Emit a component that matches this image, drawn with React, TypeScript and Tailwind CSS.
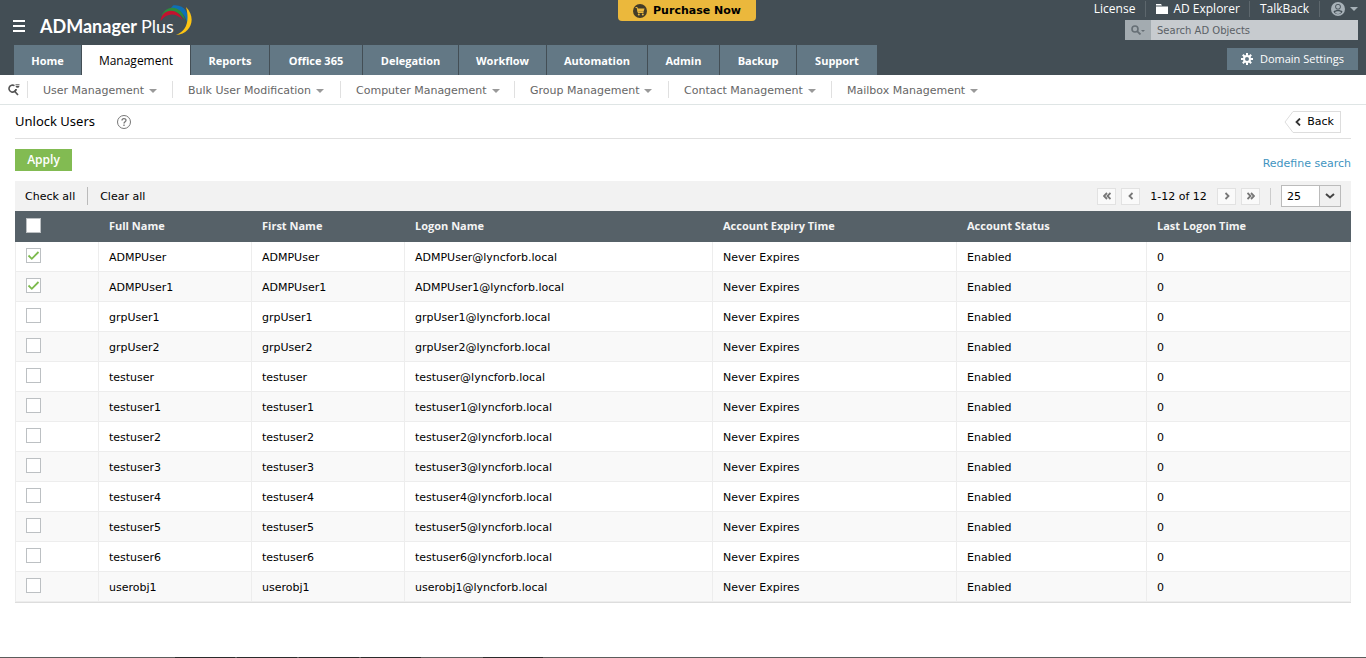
// src/pages/UnlockUsers.tsx
import React, { useState } from 'react'

interface Tab {
  label: string
  width: string
}

interface User {
  name: string
  logon: string
}

const tabs: Tab[] = [
  { label: 'Home', width: 'w-[67px]' },
  { label: 'Management', width: 'w-[108px]' },
  { label: 'Reports', width: 'w-[78px]' },
  { label: 'Office 365', width: 'w-[92px]' },
  { label: 'Delegation', width: 'w-[95px]' },
  { label: 'Workflow', width: 'w-[87px]' },
  { label: 'Automation', width: 'w-[100px]' },
  { label: 'Admin', width: 'w-[71px]' },
  { label: 'Backup', width: 'w-[76px]' },
  { label: 'Support', width: 'w-[80px]' },
]

const menus: Tab[] = [
  { label: 'User Management', width: 'w-[145px]' },
  { label: 'Bulk User Modification', width: 'w-[168px]' },
  { label: 'Computer Management', width: 'w-[174px]' },
  { label: 'Group Management', width: 'w-[154px]' },
  { label: 'Contact Management', width: 'w-[163px]' },
  { label: 'Mailbox Management', width: 'w-[163px]' },
]

const users: User[] = [
  'ADMPUser',
  'ADMPUser1',
  'grpUser1',
  'grpUser2',
  'testuser',
  'testuser1',
  'testuser2',
  'testuser3',
  'testuser4',
  'testuser5',
  'testuser6',
  'userobj1',
].map((name) => ({ name, logon: `${name}@lyncforb.local` }))

const columns = [
  'Full Name',
  'First Name',
  'Logon Name',
  'Account Expiry Time',
  'Account Status',
  'Last Logon Time',
]

const Logo: React.FC = () => (
  <div className="flex items-start font-['Lato',sans-serif] text-[18px] leading-6 text-white">
    <span className="pt-[14px] font-bold">ADManager</span>
    <span className="pt-[14px] pl-1">Plus</span>
    <svg className="-ml-[14px] mt-1 h-8 w-8" viewBox="0 0 32 32" fill="none">
      <path d="M13 1.500C24 0 30 9 28 21C25 10 21 6 11 4Z" fill="#0f6fb5" />
      <path d="M1.500 12C6 0 22 1 25 16C18 6 10 5 1.500 12Z" fill="#2d8a3e" />
      <path d="M.5 17C2 4 18 3 22.500 16C16 8.500 7 8.500 .5 17Z" fill="#c3122f" />
      <path d="M26 3C37 14 31 30 16 31C26 27 30 18 26 3Z" fill="#fcc413" />
    </svg>
  </div>
)

const Caret: React.FC<{ className?: string }> = ({ className = '' }) => (
  <svg className={`h-1 w-2 ${className}`} viewBox="0 0 8 4" fill="currentColor">
    <path d="M0 0h8L4 4Z" />
  </svg>
)

const Chevrons: React.FC<{ double?: boolean; right?: boolean }> = ({ double, right }) => (
  <svg
    className={right ? 'h-2 w-2 rotate-180' : 'h-2 w-2'}
    viewBox="0 0 8 8"
    fill="none"
    stroke="#777"
    strokeWidth="1.8"
  >
    {double ? <path d="M4 1L1 4L4 7M7.5 1L4.5 4L7.5 7" /> : <path d="M5.500 1L2.500 4L5.500 7" />}
  </svg>
)

const PageButton: React.FC<{ label: string; double?: boolean; right?: boolean }> = ({
  label,
  double,
  right,
}) => (
  <button
    aria-label={label}
    className="flex h-[17px] w-[19px] items-center justify-center border border-[#e2e2e2] bg-[#fafafa]"
    type="button"
  >
    <Chevrons double={double} right={right} />
  </button>
)

const Checkbox: React.FC<{ checked: boolean; label: string; onChange: () => void }> = ({
  checked,
  label,
  onChange,
}) => (
  <span className="grid h-[15px] w-[15px]">
    <input
      aria-label={label}
      checked={checked}
      className="col-start-1 row-start-1 h-[15px] w-[15px] appearance-none border border-[#bcc0c3] bg-white"
      onChange={onChange}
      type="checkbox"
    />
    {checked && (
      <svg
        className="pointer-events-none col-start-1 row-start-1 h-[15px] w-[15px]"
        viewBox="0 0 15 15"
        fill="none"
        stroke="#7cba4c"
        strokeWidth="1.8"
      >
        <path d="M2.500 7.500L5.800 10.800L12.500 4" />
      </svg>
    )}
  </span>
)

const Header: React.FC = () => (
  <header className="flex h-[75px] justify-between bg-[#434e55]">
    <div className="flex flex-col justify-between">
      <div className="flex h-[42px]">
        <button aria-label="Menu" className="mt-5 ml-[13px] flex h-3 w-3 flex-col justify-between" type="button">
          <span className="h-0.5 w-full bg-white" />
          <span className="h-0.5 w-full bg-white" />
          <span className="h-0.5 w-full bg-white" />
        </button>
        <div className="ml-[15px]">
          <Logo />
        </div>
      </div>
      <nav className="ml-[14px] flex gap-px">
        {tabs.map(({ label, width }) => (
          <a
            className={`${width} flex h-[30px] items-center justify-center pt-0.5 font-['Open_Sans',sans-serif] ${
              label === 'Management'
                ? 'bg-white text-[12px] text-black'
                : 'bg-[#637885] text-[11px] font-bold text-white'
            }`}
            href="#"
            key={label}
          >
            {label}
          </a>
        ))}
      </nav>
    </div>

    <button
      className="absolute left-1/2 flex h-[21px] w-[138px] -translate-x-[65px] items-center justify-center gap-[6px] rounded-b bg-[#ebb83c] text-[11px] font-bold text-black"
      type="button"
    >
      <svg className="h-[14px] w-[14px]" viewBox="0 0 14 14" fill="none">
        <circle cx="7" cy="7" r="7" fill="#433c28" />
        <path d="M2.500 3.500h1.700L5 8.500h5.500" stroke="#ebb83c" />
        <path d="M4.500 4.500h7L10.500 7.800H5Z" fill="#ebb83c" />
        <circle cx="5.800" cy="10.500" r="1" fill="#ebb83c" />
        <circle cx="9.800" cy="10.500" r="1" fill="#ebb83c" />
      </svg>
      <span className="pt-0.5">Purchase Now</span>
    </button>

    <div className="mr-2 flex flex-col items-end">
      <div className="flex h-5 items-center pb-0.5 font-['Open_Sans',sans-serif] text-[12px] text-white">
        <a className="pr-[10px]" href="#">
          License
        </a>
        <a className="flex h-4 items-center gap-[5px] border-l border-[#5d676d] pr-[9px] pl-[10px]" href="#">
          <svg className="h-[10px] w-3" viewBox="0 0 12 10" fill="currentColor">
            <path d="M0 0h5l1 1.500H0ZM0 2.500h12V10H0Z" />
          </svg>
          AD Explorer
        </a>
        <a className="flex h-4 items-center border-l border-[#5d676d] px-[10px]" href="#">
          TalkBack
        </a>
        <button
          aria-label="Account"
          className="flex h-4 items-center gap-[5px] border-l border-[#5d676d] pl-[11px] text-[#a7b1b8]"
          type="button"
        >
          <svg className="h-[14px] w-[14px]" viewBox="0 0 14 14">
            <circle cx="7" cy="7" r="7" fill="currentColor" />
            <circle cx="7" cy="4.800" r="2.800" fill="#434e55" />
            <circle cx="7" cy="4.800" r="2" fill="#a7b1b8" />
            <path d="M2.500 9.500C4 7.500 10 7.500 11.500 9.500C10 13 4 13 2.500 9.500Z" fill="#434e55" />
            <path d="M4 10.300C5 9 9 9 10 10.300C9 12.500 5 12.500 4 10.300Z" fill="#a7b1b8" />
          </svg>
          <Caret />
        </button>
      </div>
      <div className="flex h-5 w-[233px]">
        <button
          aria-label="Search"
          className="flex w-[26px] items-center justify-center bg-[#a3abb0] text-[#666f75]"
          type="button"
        >
          <svg className="h-[10px] w-[14px]" viewBox="0 0 14 10" fill="none" stroke="currentColor">
            <circle cx="4" cy="4" r="3" strokeWidth="1.600" />
            <path d="M6.300 6.300L9.500 9.500" strokeWidth="1.800" />
            <path d="M10 5h4l-2 2Z" fill="currentColor" stroke="none" />
          </svg>
        </button>
        <input
          aria-label="Search AD Objects"
          className="min-w-0 flex-1 bg-[#c7cbcf] px-[6px] text-[10px] text-[#555] placeholder:text-[#5b6166]"
          placeholder="Search AD Objects"
          type="text"
        />
      </div>
      <button
        className="mt-2 flex h-[22px] w-[131px] items-center justify-center gap-[7px] bg-[#637885] font-['Open_Sans',sans-serif] text-[11px] font-medium text-white"
        type="button"
      >
        <svg className="h-3 w-3" viewBox="0 0 12 12" fill="none" stroke="currentColor">
          <circle cx="6" cy="6" r="3" strokeWidth="2" />
          <path
            d="M6 0v2.500M6 9.500V12M0 6h2.500M9.500 6H12M1.800 1.800l1.700 1.700M8.500 8.500l1.700 1.700M1.800 10.200l1.700-1.700M8.500 3.500l1.700-1.700"
            strokeWidth="2"
          />
        </svg>
        Domain Settings
      </button>
    </div>
  </header>
)

const SubMenu: React.FC = () => (
  <nav className="flex h-[30px] items-center border-b border-[#dfe5e5] text-[11px] text-[#666]">
    <button aria-label="Find" className="flex w-[27px] justify-center" type="button">
      <svg className="h-3 w-3" viewBox="0 0 12 12" fill="none" stroke="#555">
        <path d="M6.500 1.700A3.500 3.500 0 1 0 8 5" strokeWidth="1.600" />
        <path d="M8 5C8 6 7.500 7 6.800 7.500L10 11" strokeWidth="1.700" />
        <path d="M7.500 .8h4M8 2.500h3L9.500 4Z" strokeWidth="1" />
      </svg>
    </button>
    {menus.map(({ label, width }) => (
      <button
        className={`${width} flex h-[17px] items-center gap-[5px] border-l border-[#e0e0e0] pl-[15px] whitespace-nowrap`}
        key={label}
        type="button"
      >
        <span className="pt-[3px]">{label}</span>
        <Caret className="mt-0.5 text-[#999]" />
      </button>
    ))}
  </nav>
)

export default function App() {
  const [selected, setSelected] = useState<string[]>(['ADMPUser', 'ADMPUser1'])

  const toggle = (name: string) => {
    setSelected(selected.includes(name) ? selected.filter((n) => n !== name) : [...selected, name])
  }

  const checkAll = () => setSelected(users.map((user) => user.name))
  const clearAll = () => setSelected([])
  const allChecked = selected.length === users.length

  return (
    <div className="flex min-h-screen flex-col bg-white font-['DejaVu_Sans',sans-serif] text-[11px] text-black">
      <Header />
      <SubMenu />

      <main className="mx-[15px] flex-1">
        <div className="flex h-[34px] items-center justify-between border-b border-[#e0e0e0]">
          <div className="flex items-center gap-[22px]">
            <h1 className="font-['Noto_Sans',sans-serif] text-[13px]">Unlock Users</h1>
            <button aria-label="Help" type="button">
              <svg className="h-[14px] w-[14px]" viewBox="0 0 14 14" fill="none" stroke="#777">
                <circle cx="7" cy="7" r="6.500" />
                <path d="M5 5.500C5 3 9 3 9 5.300C9 6.800 7 6.600 7 8.500M7 9.500V11" strokeWidth="1.300" />
              </svg>
            </button>
          </div>
          <button className="mr-[10px] flex h-[22px]" type="button">
            <svg className="h-[22px] w-[9px]" viewBox="0 0 9 22" fill="none" stroke="#ddd">
              <path d="M9 .5L1 11L9 21.500" />
            </svg>
            <span className="flex h-[22px] items-center gap-[6px] border border-l-0 border-[#ddd] pr-[6px] pl-[2px]">
              <svg className="h-2 w-[6px]" viewBox="0 0 6 8" fill="none" stroke="#333" strokeWidth="1.800">
                <path d="M5 .5L1.500 4L5 7.500" />
              </svg>
              <span className="pt-0.5">Back</span>
            </span>
          </button>
        </div>

        <div className="flex h-[42px] items-center justify-between">
          <button
            className="h-[22px] w-[57px] bg-[#82bb52] font-['Open_Sans',sans-serif] text-[12px] font-semibold text-white"
            type="button"
          >
            Apply
          </button>
          <a className="pt-2 text-[#3f94bf]" href="#">
            Redefine search
          </a>
        </div>

        <div className="flex h-[30px] items-center justify-between bg-[#f2f2f2] pr-[10px]">
          <div className="flex items-center">
            <button className="h-[18px] border-r border-[#bbb] pt-0.5 pr-3 pl-[10px]" onClick={checkAll} type="button">
              Check all
            </button>
            <button className="px-3 pt-0.5" onClick={clearAll} type="button">
              Clear all
            </button>
          </div>
          <div className="flex items-center">
            <div className="flex gap-[5px]">
              <PageButton double label="First page" />
              <PageButton label="Previous page" />
            </div>
            <span className="w-[77px] pt-0.5 text-center">1-12 of 12</span>
            <div className="flex gap-[5px]">
              <PageButton label="Next page" right />
              <PageButton double label="Last page" right />
            </div>
            <span className="mr-[10px] ml-[10px] h-[17px] w-px bg-[#ccc]" />
            <div className="grid h-[22px] w-[60px]">
              <select
                aria-label="Rows per page"
                className="col-start-1 row-start-1 appearance-none border border-[#bbb] bg-white pt-0.5 pl-[5px]"
                defaultValue="25"
              >
                <option>25</option>
                <option>50</option>
                <option>100</option>
              </select>
              <span className="pointer-events-none col-start-1 row-start-1 my-px mr-px flex w-[21px] items-center justify-center justify-self-end border-l border-[#bbb] bg-[#f0f0f0]">
                <svg className="h-[6px] w-[10px]" viewBox="0 0 10 6" fill="none" stroke="#444" strokeWidth="2">
                  <path d="M1 1L5 4.500L9 1" />
                </svg>
              </span>
            </div>
          </div>
        </div>

        <table className="w-full table-fixed border-separate border-spacing-0 border-b border-[#ddd] text-left">
          <colgroup>
            <col className="w-[84px]" />
            <col className="w-[153px]" />
            <col className="w-[153px]" />
            <col className="w-[308px]" />
            <col className="w-[244px]" />
            <col className="w-[190px]" />
            <col />
          </colgroup>
          <thead>
            <tr className="h-[31px] bg-[#566168] font-['Open_Sans',sans-serif] text-[11px] text-[#f4f4f4]">
              <th className="pb-[3px] pl-[11px]">
                <Checkbox checked={allChecked} label="Select all" onChange={allChecked ? clearAll : checkAll} />
              </th>
              {columns.map((column) => (
                <th className="pl-[10px] font-bold" key={column}>
                  {column}
                </th>
              ))}
            </tr>
          </thead>
          <tbody>
            {users.map(({ name, logon }) => (
              <tr
                className="h-[30px] even:bg-[#f9f9f9] *:border-r *:border-b *:border-[#ededed] *:pl-[10px]"
                key={name}
              >
                <td className="border-l pb-0.5">
                  <Checkbox checked={selected.includes(name)} label={`Select ${name}`} onChange={() => toggle(name)} />
                </td>
                <td className="pt-[3px]">{name}</td>
                <td className="pt-[3px]">{name}</td>
                <td className="pt-[3px]">{logon}</td>
                <td className="pt-[3px]">Never Expires</td>
                <td className="pt-[3px]">Enabled</td>
                <td className="pt-[3px]">0</td>
              </tr>
            ))}
          </tbody>
        </table>
      </main>

      <footer className="flex h-px gap-0.5 bg-[#5c5c5c] pl-[175px]">
        <span className="w-[60px] bg-[#2b2b2b]" />
        <span className="w-[60px] bg-[#2b2b2b]" />
        <span className="w-[60px] bg-[#2b2b2b]" />
        <span className="w-[60px] bg-[#2b2b2b]" />
        <span className="ml-[60px] w-[60px] bg-[#2b2b2b]" />
      </footer>
    </div>
  )
}
